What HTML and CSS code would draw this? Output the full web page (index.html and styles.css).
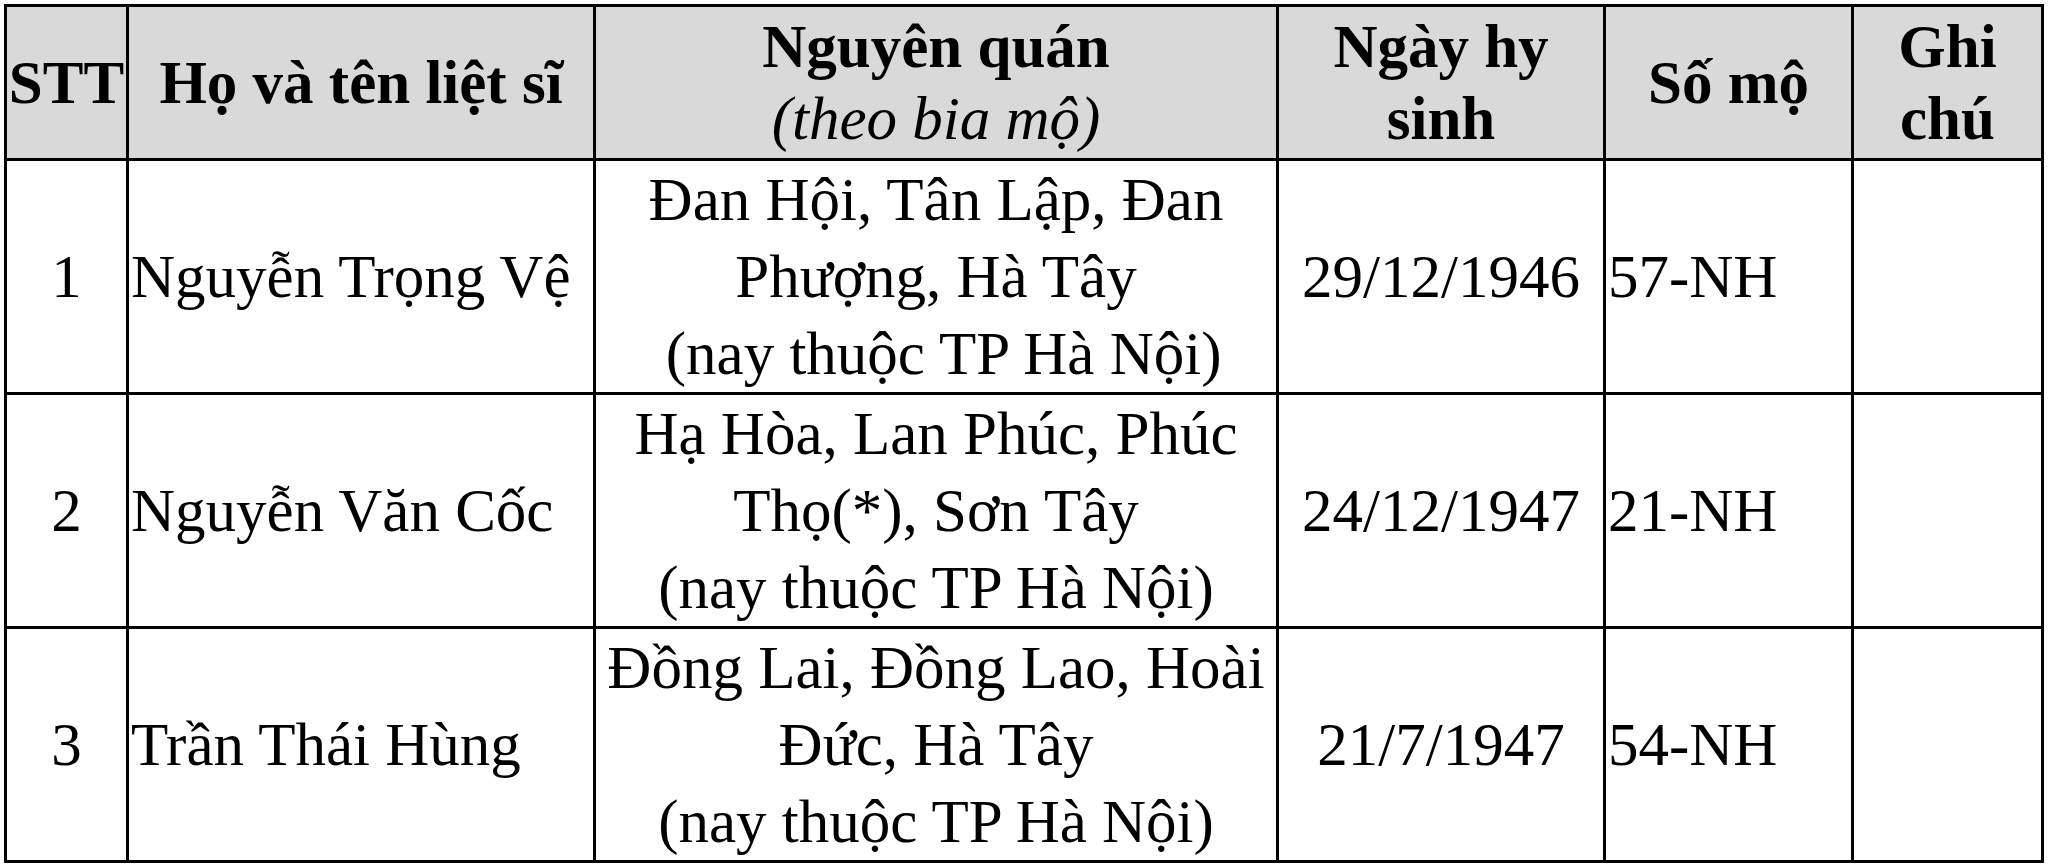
FILE: index.html
```html
<!DOCTYPE html>
<html lang="vi">
<head>
<meta charset="utf-8">
<title>Danh sách liệt sĩ</title>
<link rel="stylesheet" href="styles.css">
</head>
<body>
<table class="grid">
  <colgroup>
    <col class="c-stt">
    <col class="c-name">
    <col class="c-origin">
    <col class="c-date">
    <col class="c-grave">
    <col class="c-note">
  </colgroup>
  <thead>
    <tr class="head">
      <th>STT</th>
      <th>Họ và tên liệt sĩ</th>
      <th>Nguyên quán<br><span class="sub">(theo bia mộ)</span></th>
      <th>Ngày hy<br>sinh</th>
      <th>Số mộ</th>
      <th>Ghi<br>chú</th>
    </tr>
  </thead>
  <tbody>
    <tr class="row first">
      <td class="center">1</td>
      <td class="left">Nguyễn Trọng Vệ</td>
      <td class="center">Đan Hội, Tân Lập, Đan<br>Phượng, Hà Tây<br>&nbsp;(nay thuộc TP Hà Nội)</td>
      <td class="center">29/12/1946</td>
      <td class="left">57-NH</td>
      <td></td>
    </tr>
    <tr class="row">
      <td class="center">2</td>
      <td class="left">Nguyễn Văn Cốc</td>
      <td class="center">Hạ Hòa, Lan Phúc, Phúc<br>Thọ(*), Sơn Tây<br>(nay thuộc TP Hà Nội)</td>
      <td class="center">24/12/1947</td>
      <td class="left">21-NH</td>
      <td></td>
    </tr>
    <tr class="row">
      <td class="center">3</td>
      <td class="left">Trần Thái Hùng</td>
      <td class="center">Đồng Lai, Đồng Lao, Hoài<br>Đức, Hà Tây<br>(nay thuộc TP Hà Nội)</td>
      <td class="center">21/7/1947</td>
      <td class="left">54-NH</td>
      <td></td>
    </tr>
  </tbody>
</table>
</body>
</html>
```

FILE: styles.css
```css
html, body {
  margin: 0;
  padding: 0;
  background: #ffffff;
}

body {
  padding: 4px 0 0 4px;
  font-family: "Liberation Serif", "Times New Roman", serif;
  color: #000;
}

.grid {
  border-collapse: collapse;
  table-layout: fixed;
  width: 2037px;
  font-size: 61px;
  line-height: 77px;
}

.c-stt { width: 122px; }
.c-name { width: 467px; }
.c-origin { width: 683px; }
.c-date { width: 327px; }
.c-grave { width: 248px; }
.c-note { width: 190px; }

.grid th,
.grid td {
  border: 3px solid #000;
  padding: 0 2px;
  vertical-align: middle;
  white-space: nowrap;
  overflow: hidden;
}

.head th {
  height: 151px;
  background: #d9d9d9;
  font-weight: bold;
  text-align: center;
  line-height: 72px;
  padding: 0;
}

.head .sub {
  font-weight: normal;
  font-style: italic;
}

.row td {
  height: 229px;
}

.row.first td {
  height: 226px;
}

.center { text-align: center; }
.left { text-align: left; }
```
